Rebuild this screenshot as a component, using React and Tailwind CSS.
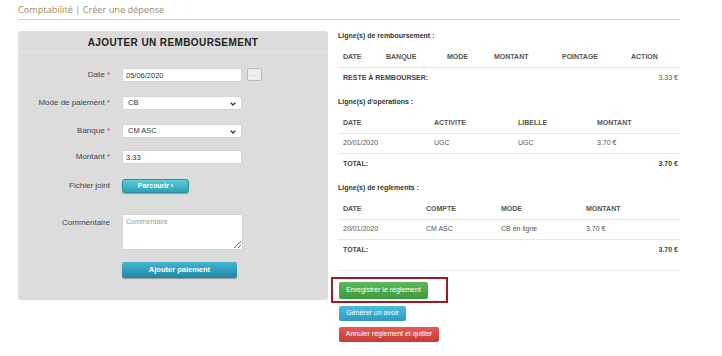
import { useState } from 'react';

const remboursementCols = ['DATE', 'BANQUE', 'MODE', 'MONTANT', 'POINTAGE', 'ACTION'];
const operationCols = ['DATE', 'ACTIVITE', 'LIBELLE', 'MONTANT'];
const reglementCols = ['DATE', 'COMPTE', 'MODE', 'MONTANT'];

function Chevron() {
  return (
    <svg width="6" height="4" viewBox="0 0 6 4" className="absolute right-[5px] top-[5px]">
      <path d="M0.6 0.6 L3 3 L5.4 0.6" fill="none" stroke="#333" strokeWidth="1.3" />
    </svg>
  );
}

function FormRow({ label, required, children, className = '' }) {
  return (
    <div className={`flex items-center ${className}`}>
      <div className="w-[94px] pr-[2px] text-right text-[8px] text-[#444]">
        {label}
        {required && <span className="text-[#e03030]"> *</span>}
      </div>
      <div className="ml-[10px] flex items-center">{children}</div>
    </div>
  );
}

function FakeSelect({ value }) {
  return (
    <div className="relative h-[14px] w-[120px] rounded-[2px] border border-[#d4d4d4] bg-white pl-[5px] text-[7.5px] leading-[12px] text-[#333]">
      {value}
      <Chevron />
    </div>
  );
}

function SectionTitle({ children, className = '' }) {
  return <div className={`h-[10px] text-[7px] font-bold leading-[10px] text-[#333] ${className}`}>{children}</div>;
}

export default function App() {
  const [date, setDate] = useState('05/06/2020');
  const [montant, setMontant] = useState('3.33');
  const [commentaire, setCommentaire] = useState('');

  return (
    <div className="h-[356px] w-[722px] bg-white font-['Liberation_Sans',Arial,sans-serif]">
      <div className="ml-[18px] w-[662px] pt-[4px]">
        <div className="h-[16px] border-b border-[#d9cfbd] font-['Open_Sans',sans-serif] text-[9.2px] leading-[12px] text-[#a08a68]">
          Comptabilité | Créer une dépense
        </div>

        <div className="mt-[11px] flex gap-[10px]">
          {/* formulaire */}
          <div className="h-[269px] w-[310px] rounded-[3px] bg-[#dcdcdc]">
            <div className="h-[22px] border-b border-[#e6e6e6] text-center text-[10px] font-bold leading-[24px] tracking-[0.4px] text-[#222]">
              AJOUTER UN REMBOURSEMENT
            </div>
            <div className="pt-[15px]">
              <FormRow label="Date" required>
                <input
                  value={date}
                  onChange={(e) => setDate(e.target.value)}
                  className="h-[14px] w-[120px] rounded-[2px] border border-[#d4d4d4] bg-white pl-[3px] text-[7.5px] text-[#333] outline-none"
                />
                <button className="ml-[5px] h-[13px] w-[15px] -translate-y-[1px] rounded-[2px] border border-[#b8b8b8] bg-[#eeeeee] text-[6px] leading-[8px] text-[#999]">
                  ...
                </button>
              </FormRow>
              <FormRow label="Mode de paiement" required className="mt-[14px]">
                <FakeSelect value="CB" />
              </FormRow>
              <FormRow label="Banque" required className="mt-[14px]">
                <FakeSelect value="CM ASC" />
              </FormRow>
              <FormRow label="Montant" required className="mt-[12px]">
                <input
                  value={montant}
                  onChange={(e) => setMontant(e.target.value)}
                  className="h-[14px] w-[120px] rounded-[2px] border border-[#d4d4d4] bg-white pl-[3px] text-[7.5px] text-[#333] outline-none"
                />
              </FormRow>
              <FormRow label="Fichier joint" className="mt-[15px]">
                <button className="h-[14px] w-[67px] rounded-[3px] border border-[#2a8fa0] bg-gradient-to-b from-[#5ccbd9] to-[#2aa3b8] text-[7px] font-bold text-white shadow-[0_1px_1px_rgba(0,0,0,0.3)]">
                  Parcourir ›
                </button>
              </FormRow>
              <div className="mt-[21px] flex items-start">
                <div className="w-[94px] pr-[2px] pt-[3px] text-right text-[8px] text-[#444]">Commentaire</div>
                <textarea
                  value={commentaire}
                  onChange={(e) => setCommentaire(e.target.value)}
                  placeholder="Commentaire"
                  className="ml-[10px] block h-[36px] w-[121px] rounded-[2px] border border-[#d4d4d4] bg-white px-[3px] py-[2px] text-[7px] leading-[9px] text-[#333] outline-none placeholder:text-[#999]"
                />
              </div>
              <div className="ml-[104px] mt-[12px] flex">
                <button className="h-[16px] w-[115px] rounded-[2px] bg-gradient-to-b from-[#45b5d0] to-[#1f86a5] text-[7.5px] font-bold text-white shadow-[0_1px_1px_rgba(0,0,0,0.3)]">
                  Ajouter paiement
                </button>
              </div>
            </div>
          </div>

          {/* tableaux */}
          <div className="w-[342px] text-[7px] text-[#555]">
            <SectionTitle>Ligne(s) de remboursement :</SectionTitle>
            <div className="mt-[7px]">
              <div className="grid h-[20px] grid-cols-[43px_61px_47px_68px_69px_1fr] items-center border-b border-[#e6e6e6] font-bold text-[#555]">
                {remboursementCols.map((c) => (
                  <div key={c} className="pl-[5px]">{c}</div>
                ))}
              </div>
              <div className="flex h-[20px] items-center justify-between pl-[5px] pr-[2px] font-bold text-[#444]">
                <span>RESTE À REMBOURSER:</span>
                <span className="font-normal text-[#555]">3.33 €</span>
              </div>
            </div>

            <SectionTitle className="mt-[9px]">Ligne(s) d'opérations :</SectionTitle>
            <div className="mt-[7px]">
              <div className="grid h-[20px] grid-cols-[91px_84px_79px_1fr] items-center border-b border-[#e6e6e6] font-bold">
                {operationCols.map((c) => (
                  <div key={c} className="pl-[5px]">{c}</div>
                ))}
              </div>
              <div className="grid h-[20px] grid-cols-[91px_84px_79px_1fr] items-center border-b border-[#e6e6e6]">
                <div className="pl-[5px]">20/01/2020</div>
                <div className="pl-[5px]">UGC</div>
                <div className="pl-[5px]">UGC</div>
                <div className="pl-[5px]">3.70 €</div>
              </div>
              <div className="flex h-[20px] items-center justify-between pl-[5px] pr-[2px] font-bold text-[#444]">
                <span>TOTAL:</span>
                <span>3.70 €</span>
              </div>
            </div>

            <SectionTitle className="mt-[9px]">Ligne(s) de réglements :</SectionTitle>
            <div className="mt-[7px]">
              <div className="grid h-[20px] grid-cols-[83px_75px_85px_1fr] items-center border-b border-[#e6e6e6] font-bold">
                {reglementCols.map((c) => (
                  <div key={c} className="pl-[5px]">{c}</div>
                ))}
              </div>
              <div className="grid h-[20px] grid-cols-[83px_75px_85px_1fr] items-center border-b border-[#e6e6e6]">
                <div className="pl-[5px]">20/01/2020</div>
                <div className="pl-[5px]">CM ASC</div>
                <div className="pl-[5px]">CB en ligne</div>
                <div className="pl-[5px]">3.70 €</div>
              </div>
              <div className="flex h-[20px] items-center justify-between pl-[5px] pr-[2px] font-bold text-[#444]">
                <span>TOTAL:</span>
                <span>3.70 €</span>
              </div>
            </div>
            <div className="h-[11px] border-b border-[#ececec]" />

            <div className="-ml-[7px] mt-[6px] flex h-[26px] w-[117px] items-start border-2 border-[#9b1b24] pl-[6px] pt-[3px]">
              <button className="h-[17px] w-[89px] rounded-[2px] bg-gradient-to-b from-[#5cb85c] to-[#3e9a3e] text-[7px] text-white">
                Enregistrer le réglement
              </button>
            </div>
            <div className="ml-[1px] mt-[3px] flex">
              <button className="h-[15px] w-[67px] rounded-[2px] bg-gradient-to-b from-[#4cbcdc] to-[#2a9cc0] text-[7px] text-white">
                Générer un avoir
              </button>
            </div>
            <div className="ml-[1px] mt-[6px] flex">
              <button className="h-[15px] w-[100px] rounded-[2px] bg-gradient-to-b from-[#e25a56] to-[#c93a36] text-[7px] text-white">
                Annuler réglement et quitter
              </button>
            </div>
          </div>
        </div>
      </div>
    </div>
  );
}
